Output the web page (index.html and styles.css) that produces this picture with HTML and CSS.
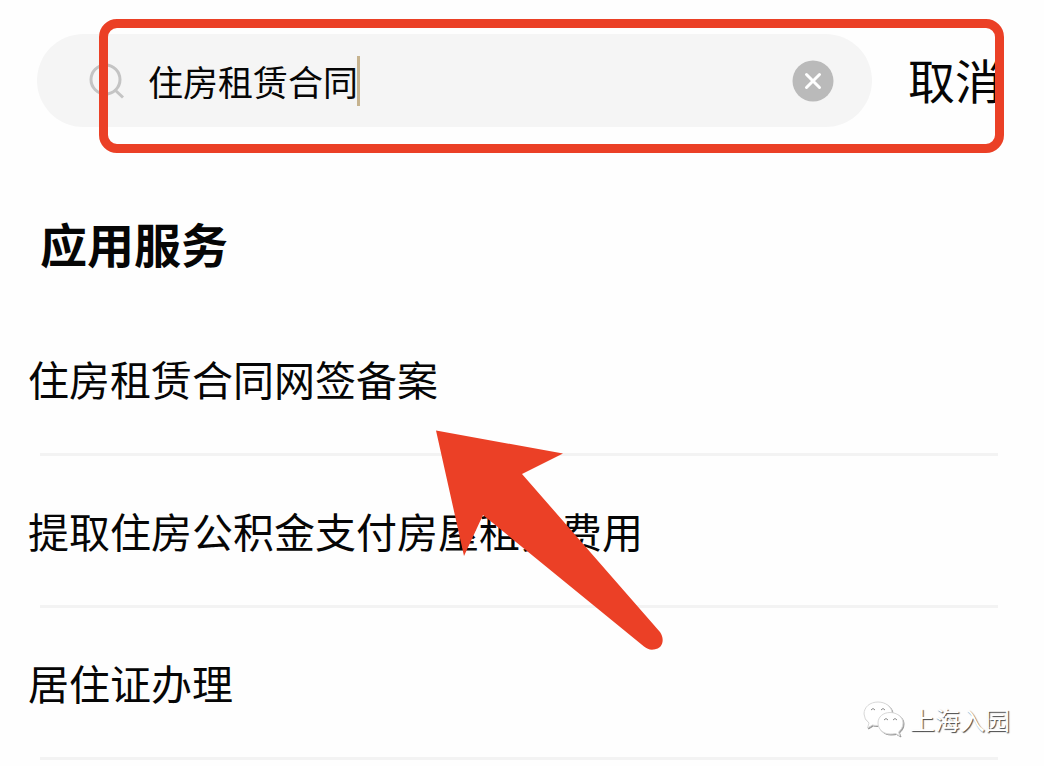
FILE: index.html
```html
<!DOCTYPE html>
<html lang="zh-CN">
<head>
    <meta charset="UTF-8">
    <meta name="viewport" content="width=device-width, initial-scale=1.0">
    <title>搜索</title>
    <link rel="stylesheet" href="styles.css">
</head>
<body>
    <header class="search-header">
        <form class="search-bar" role="search">
            <svg class="search-icon" viewBox="0 0 36 36" aria-hidden="true">
                <circle cx="16.500" cy="16.500" r="14.500"/>
                <path d="M25.500 26.500L34 34.500"/>
            </svg>
            <input class="search-input" type="text" value="住房租赁合同" aria-label="搜索">
            <span class="caret"></span>
            <button class="clear-btn" type="reset" aria-label="清除">
                <svg viewBox="0 0 42 42" aria-hidden="true">
                    <circle cx="21" cy="21" r="20.5"/>
                    <path d="M14.5 14.5l13 13M27.5 14.5l-13 13"/>
                </svg>
            </button>
        </form>
        <button class="cancel-btn" type="button">取消</button>
    </header>

    <main class="results">
        <h2 class="results-title">应用服务</h2>
        <ul class="results-list">
            <li><a href="#">住房租赁合同网签备案</a></li>
            <li><a href="#">提取住房公积金支付房屋租赁费用</a></li>
            <li><a href="#">居住证办理</a></li>
        </ul>
    </main>

    <!-- annotations drawn over the page -->
    <div class="highlight-box"></div>
    <svg class="arrow" viewBox="0 0 228 220" aria-hidden="true">
        <path d="M0 -0.500L127 22.500L86 43L224 201C229 208 227 218 218 218.500C214 219 211 218 208 215.500L47 84L28 125Z"/>
    </svg>

    <div class="watermark">
        <svg viewBox="0 0 42 36" aria-hidden="true">
            <path class="bubble" d="M15 24.500Q11 24.500 9.500 24L4.500 27L6 22Q1 18 1 13C1 6 7 1 15 1C22 1 28 5 29 11"/>
            <path class="bubble" d="M27 11.500C34 11.500 40 16 40 22C40 26 38 29 35.500 31L37 35L32.500 32.500Q30 33 27 33C20 33 15 28 15 22C15 16 20 11.500 27 11.500Z"/>
            <path class="eye" d="M8 9Q10 6 12 9M18 9Q20 6 22 9M21 19Q23 16 25 19M30 19Q32 16 34 19"/>
        </svg>
        <span>上海入园</span>
    </div>
</body>
</html>
```
FILE: styles.css
```css
:root {
    --bg-color: #fefefe;
    --text-color: #060606;
    --bar-color: #f5f5f5;
    --line-color: #f3f3f3;
    --icon-color: #bababa;
    --mark-color: #eb4026;
}

* {
    box-sizing: border-box;
    margin: 0;
    padding: 0;
}

body {
    position: relative;
    min-height: 100vh;
    font-family: "Noto Sans CJK SC", sans-serif;
    background-color: var(--bg-color);
    color: var(--text-color);
}

button,
input {
    font-family: inherit;
    color: inherit;
    border: none;
    background: none;
}

.search-header {
    display: flex;
    align-items: center;
    gap: 36px;
    padding: 34px 42px 0 37px;
}

.search-bar {
    display: flex;
    flex: 1;
    align-items: center;
    height: 93px;
    padding: 0 38px 0 52px;
    border-radius: 47px;
    background-color: var(--bar-color);
}

.search-icon {
    width: 36px;
    height: 36px;
    margin-right: 23px;
    fill: none;
    stroke: #c4c4c4;
    stroke-width: 3;
}

.search-input {
    width: 209px;
    height: 54px;
    font-size: 35px;
    outline: none;
}

.caret {
    width: 3px;
    height: 50px;
    background-color: #c6b38f;
}

.clear-btn {
    width: 42px;
    height: 42px;
    margin-left: auto;
    cursor: pointer;
}

.clear-btn svg {
    display: block;
    fill: var(--icon-color);
    stroke: #ffffff;
    stroke-width: 3;
    stroke-linecap: round;
}

.clear-btn circle {
    stroke: none;
}

.cancel-btn {
    padding-bottom: 4px;
    font-size: 47px;
    line-height: 64px;
    cursor: pointer;
}

.results {
    padding: 84px 46px 0 40px;
}

.results-title {
    font-size: 47px;
    font-weight: 700;
    line-height: 64px;
}

.results-list {
    padding-top: 29px;
    list-style: none;
}

.results-list li {
    border-bottom: 3px solid var(--line-color);
}

.results-list a {
    display: block;
    margin-left: -12px;
    padding: 44px 0 45px;
    font-size: 41px;
    line-height: 60px;
    color: inherit;
    text-decoration: none;
}

.highlight-box {
    position: absolute;
    top: 19px;
    left: 99px;
    right: 40px;
    height: 134px;
    border: 9px solid var(--mark-color);
    border-radius: 18px;
    pointer-events: none;
}

.arrow {
    position: absolute;
    top: 431px;
    left: 436px;
    width: 228px;
    height: 220px;
    overflow: visible;
    fill: var(--mark-color);
    pointer-events: none;
}

.watermark {
    position: absolute;
    top: 701px;
    right: 34px;
    display: flex;
    align-items: center;
    gap: 5px;
    font-size: 25px;
    line-height: 36px;
    color: #ffffff;
    text-shadow: 1px 1px 1px #444444;
}

.watermark svg {
    width: 42px;
    height: 36px;
    fill: #ffffff;
    filter: drop-shadow(1px 1px 0 #999999);
}

.watermark .bubble {
    stroke: #d8d8d8;
}

.watermark .eye {
    fill: none;
    stroke: #888888;
}
```
